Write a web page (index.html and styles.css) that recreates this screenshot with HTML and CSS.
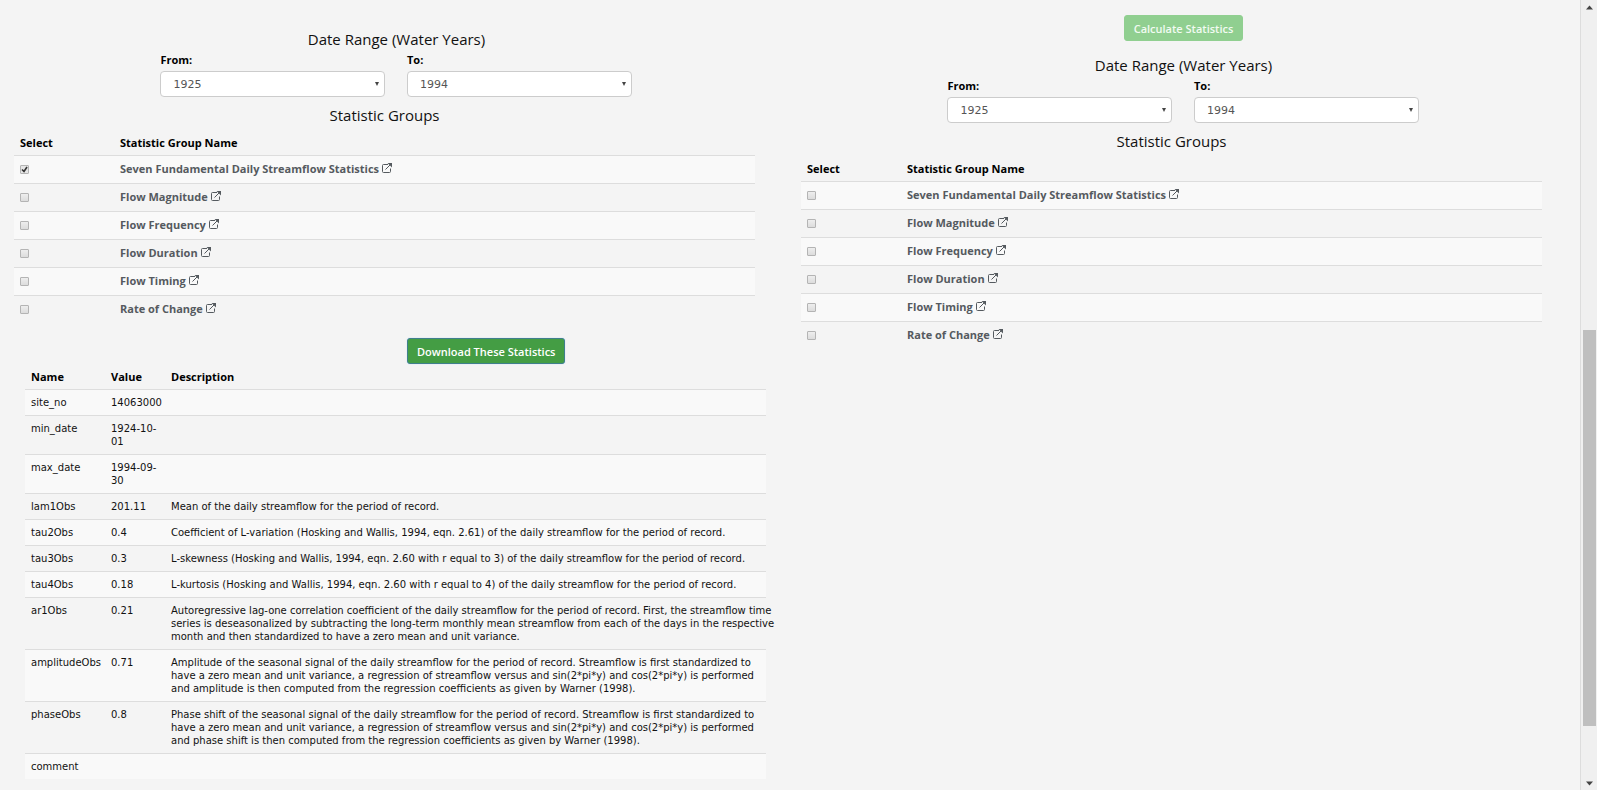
FILE: index.html
```
<!DOCTYPE html>
<html lang="en">
<head>
<meta charset="utf-8">
<title>Streamflow Statistics</title>
<link rel="stylesheet" href="styles.css">
</head>
<body>
<svg class="defs" aria-hidden="true">
  <symbol id="ext" viewBox="0 0 10 10">
    <path d="M6 1.500H1.500Q.5 1.500 .5 2.500V8.500Q.5 9.500 1.500 9.500H7.500Q8.500 9.500 8.500 8.500V5.500M3.500 6.500L9 1" fill="none" stroke="currentColor"/>
    <path d="M5.500 0H10V4.500Z" fill="currentColor"/>
  </symbol>
</svg>
<div class="page">
<main class="columns">
  <section class="column">
    <h2 class="heading">Date Range (Water Years)</h2>
    <div class="range">
      <div class="field"><label for="from1">From:</label><select id="from1"><option>1925</option></select></div>
      <div class="field"><label for="to1">To:</label><select id="to1"><option>1994</option></select></div>
    </div>
    <h2 class="heading heading-groups">Statistic Groups</h2>
    <table class="table groups">
      <thead><tr><th class="select">Select</th><th>Statistic Group Name</th></tr></thead>
      <tbody>
        <tr><td><input type="checkbox" id="a1" checked></td><td><label for="a1">Seven Fundamental Daily Streamflow Statistics</label> <a href="#" aria-label="Details"><svg class="ext"><use href="#ext"/></svg></a></td></tr>
        <tr><td><input type="checkbox" id="a2"></td><td><label for="a2">Flow Magnitude</label> <a href="#" aria-label="Details"><svg class="ext"><use href="#ext"/></svg></a></td></tr>
        <tr><td><input type="checkbox" id="a3"></td><td><label for="a3">Flow Frequency</label> <a href="#" aria-label="Details"><svg class="ext"><use href="#ext"/></svg></a></td></tr>
        <tr><td><input type="checkbox" id="a4"></td><td><label for="a4">Flow Duration</label> <a href="#" aria-label="Details"><svg class="ext"><use href="#ext"/></svg></a></td></tr>
        <tr><td><input type="checkbox" id="a5"></td><td><label for="a5">Flow Timing</label> <a href="#" aria-label="Details"><svg class="ext"><use href="#ext"/></svg></a></td></tr>
        <tr><td><input type="checkbox" id="a6"></td><td><label for="a6">Rate of Change</label> <a href="#" aria-label="Details"><svg class="ext"><use href="#ext"/></svg></a></td></tr>
      </tbody>
    </table>
    <div class="download"><button class="button focused" type="button">Download These Statistics</button></div>
    <table class="table results">
      <thead><tr><th class="name">Name</th><th class="value">Value</th><th>Description</th></tr></thead>
      <tbody>
        <tr><td>site_no</td><td>14063000</td><td></td></tr>
        <tr><td>min_date</td><td>1924-10-<br>01</td><td></td></tr>
        <tr><td>max_date</td><td>1994-09-<br>30</td><td></td></tr>
        <tr><td>lam1Obs</td><td>201.11</td><td>Mean of the daily streamflow for the period of record.</td></tr>
        <tr><td>tau2Obs</td><td>0.4</td><td>Coefficient of L-variation (Hosking and Wallis, 1994, eqn. 2.61) of the daily streamflow for the period of record.</td></tr>
        <tr><td>tau3Obs</td><td>0.3</td><td>L-skewness (Hosking and Wallis, 1994, eqn. 2.60 with r equal to 3) of the daily streamflow for the period of record.</td></tr>
        <tr><td>tau4Obs</td><td>0.18</td><td>L-kurtosis (Hosking and Wallis, 1994, eqn. 2.60 with r equal to 4) of the daily streamflow for the period of record.</td></tr>
        <tr><td>ar1Obs</td><td>0.21</td><td>Autoregressive lag-one correlation coefficient of the daily streamflow for the period of record. First, the streamflow time<br>series is deseasonalized by subtracting the long-term monthly mean streamflow from each of the days in the respective<br>month and then standardized to have a zero mean and unit variance.</td></tr>
        <tr><td>amplitudeObs</td><td>0.71</td><td>Amplitude of the seasonal signal of the daily streamflow for the period of record. Streamflow is first standardized to<br>have a zero mean and unit variance, a regression of streamflow versus and sin(2*pi*y) and cos(2*pi*y) is performed<br>and amplitude is then computed from the regression coefficients as given by Warner (1998).</td></tr>
        <tr><td>phaseObs</td><td>0.8</td><td>Phase shift of the seasonal signal of the daily streamflow for the period of record. Streamflow is first standardized to<br>have a zero mean and unit variance, a regression of streamflow versus and sin(2*pi*y) and cos(2*pi*y) is performed<br>and phase shift is then computed from the regression coefficients as given by Warner (1998).</td></tr>
        <tr><td>comment</td><td></td><td></td></tr>
      </tbody>
    </table>
  </section>
  <section class="column">
    <div class="calculate"><button class="button" type="button" disabled>Calculate Statistics</button></div>
    <h2 class="heading">Date Range (Water Years)</h2>
    <div class="range">
      <div class="field"><label for="from2">From:</label><select id="from2"><option>1925</option></select></div>
      <div class="field"><label for="to2">To:</label><select id="to2"><option>1994</option></select></div>
    </div>
    <h2 class="heading heading-groups">Statistic Groups</h2>
    <table class="table groups">
      <thead><tr><th class="select">Select</th><th>Statistic Group Name</th></tr></thead>
      <tbody>
        <tr><td><input type="checkbox" id="b1"></td><td><label for="b1">Seven Fundamental Daily Streamflow Statistics</label> <a href="#" aria-label="Details"><svg class="ext"><use href="#ext"/></svg></a></td></tr>
        <tr><td><input type="checkbox" id="b2"></td><td><label for="b2">Flow Magnitude</label> <a href="#" aria-label="Details"><svg class="ext"><use href="#ext"/></svg></a></td></tr>
        <tr><td><input type="checkbox" id="b3"></td><td><label for="b3">Flow Frequency</label> <a href="#" aria-label="Details"><svg class="ext"><use href="#ext"/></svg></a></td></tr>
        <tr><td><input type="checkbox" id="b4"></td><td><label for="b4">Flow Duration</label> <a href="#" aria-label="Details"><svg class="ext"><use href="#ext"/></svg></a></td></tr>
        <tr><td><input type="checkbox" id="b5"></td><td><label for="b5">Flow Timing</label> <a href="#" aria-label="Details"><svg class="ext"><use href="#ext"/></svg></a></td></tr>
        <tr><td><input type="checkbox" id="b6"></td><td><label for="b6">Rate of Change</label> <a href="#" aria-label="Details"><svg class="ext"><use href="#ext"/></svg></a></td></tr>
      </tbody>
    </table>
  </section>
</main>
<div class="scrollbar" aria-hidden="true">
  <svg class="arrow" viewBox="0 0 16 16"><path d="M5 9L8.500 5L12 9Z" fill="#444"/></svg>
  <div class="track"><div class="thumb"></div></div>
  <svg class="arrow" viewBox="0 0 16 16"><path d="M5 8H12L8.500 12Z" fill="#444"/></svg>
</div>
</div>
</body>
</html>
```
FILE: styles.css
```
* { box-sizing: border-box; }
body {
  margin: 0;
  background: #f4f4f4;
  color: #111;
  font-family: "Open Sans", "Noto Sans", sans-serif;
  font-size: 11px;
  line-height: 13px;
}
.defs { position: absolute; width: 0; height: 0; }
.page { display: flex; height: 100vh; overflow: hidden; }
.columns { flex: 1; display: grid; grid-template-columns: 1fr 1fr; padding: 15px 3px 0; align-items: start; }
.column:first-child { padding-top: 11px; }
.calculate { display: flex; justify-content: center; margin-bottom: 11px; }
.heading { margin: 0; padding-top: 3px; font-size: 15px; font-weight: 400; line-height: 20px; text-align: center; }
.heading-groups { margin: 0 35px 0 11px; }
.range { display: flex; gap: 22px; padding: 4px calc(20% + 1px) 5px 20%; }
.field { flex: 1; display: flex; flex-direction: column; gap: 5px; }
.field label { font-weight: 700; color: #000; }
select {
  appearance: none;
  width: 100%;
  height: 26px;
  padding: 0 12px;
  border: 1px solid #ccc;
  border-radius: 4px;
  background: #fff url("data:image/svg+xml,%3Csvg xmlns='http://www.w3.org/2000/svg' viewBox='0 0 4 4'%3E%3Cpath d='M0 0H4L2 4Z' fill='%23444'/%3E%3C/svg%3E") no-repeat right 5px center / 4px 4px;
  color: #555;
  font-family: "DejaVu Sans", Verdana, sans-serif;
  font-size: 11px;
}
.table { width: calc(100% - 46px); margin-left: 11px; border-collapse: collapse; table-layout: fixed; }
.table th { padding: 6px; text-align: left; font-weight: 700; color: #000; }
.table td { padding: 6px 0 6px 6px; vertical-align: top; border-top: 1px solid #ddd; }
.table tbody tr:nth-child(odd) { background: #f9f9f9; }
.groups th { padding-top: 11px; }
.groups td { height: 28px; }
.groups .select { width: 100px; }
.groups label { font-weight: 700; color: #555a5f; }
.groups a { color: #555a5f; }
.ext { width: 10px; height: 10px; }
input[type="checkbox"] {
  appearance: none;
  display: block;
  width: 9px;
  height: 9px;
  margin: 3px 0 0;
  border: 1px solid #b4b4b4;
  border-radius: 1px;
  background: linear-gradient(#eee, #dcdcdc);
}
input[type="checkbox"]:checked {
  background: url("data:image/svg+xml,%3Csvg xmlns='http://www.w3.org/2000/svg' viewBox='0 0 7 7'%3E%3Cpath d='M1 3.500L3 5.500L6 1' fill='none' stroke='%23333' stroke-width='1.600'/%3E%3C/svg%3E") no-repeat center / 7px 7px, #e6e6e6;
}
.button {
  height: 26px;
  padding: 1px 9px 0;
  border: 1px solid #449d44;
  border-radius: 3px;
  background: #449d44;
  color: #fff;
  font: inherit;
  font-weight: 600;
}
.button:disabled { border-color: #90cf90; background: #90cf90; color: #f2fbf2; }
.button.focused { border-color: #3f7f8c; box-shadow: 0 0 1px #8fbfe8; }
.download { display: flex; padding: 14px 0 0 404px; }
.results { margin-left: 22px; }
.results td { font-family: "DejaVu Sans", Verdana, sans-serif; font-size: 10px; white-space: nowrap; }
.results .name { width: 80px; }
.results .value { width: 60px; }
.scrollbar { flex: none; display: flex; flex-direction: column; width: 17px; border-left: 1px solid #ddd; background: #f0f0f0; }
.arrow { width: 16px; height: 17px; }
.track { flex: 1; display: grid; grid-template-rows: 313fr 396fr 47fr; padding: 0 1px 0 2px; }
.thumb { grid-row: 2; background: #bfbfbf; }
```
